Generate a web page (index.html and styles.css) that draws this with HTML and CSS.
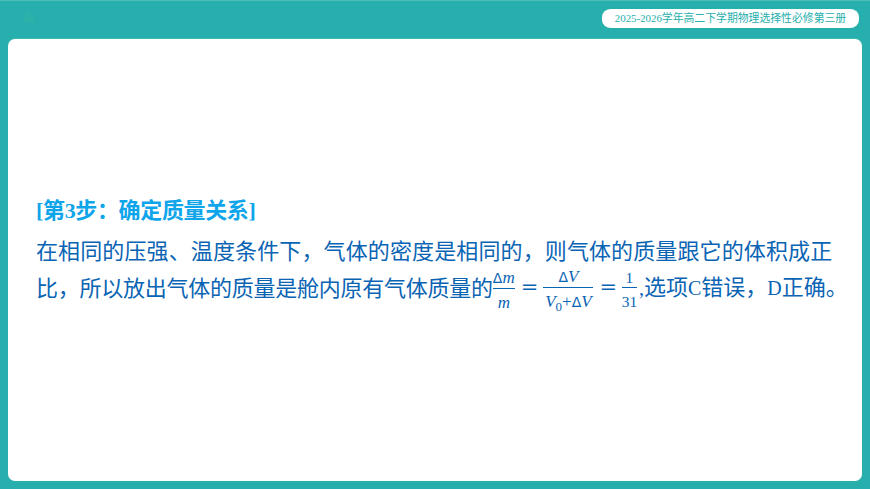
FILE: index.html
```html
<!DOCTYPE html>
<html lang="zh">
<head>
<meta charset="utf-8">
<title>物理</title>
<link rel="stylesheet" href="styles.css">
</head>
<body>
<div class="slide">
  <header class="top">
    <svg class="logo" width="14" height="14" viewBox="0 0 14 14"><path d="M7 1 L13 12 L1 12 Z" fill="#2db2a8"/></svg>
    <div class="pill">2025-2026学年高二下学期物理选择性必修第三册</div>
  </header>
  <main class="card">
    <h2 class="step">[第3步：确定质量关系]</h2>
    <p class="line">在相同的压强、温度条件下，气体的密度是相同的，则气体的质量跟它的体积成正</p>
    <p class="line second"><span class="lead">比，所以放出气体的质量是舱内原有气体质量的</span><span class="frac f1"><span class="num"><span class="up">Δ</span><i>m</i></span><span class="den"><i>m</i></span></span><span class="eq">=</span><span class="frac f2"><span class="num"><span class="up">Δ</span><i>V</i></span><span class="den"><i>V</i><sub>0</sub>+<span class="up">Δ</span><i>V</i></span></span><span class="eq">=</span><span class="frac f3"><span class="num">1</span><span class="den">31</span></span><span class="tail"><span class="latin">,</span>选项<span class="latin">C</span>错误，<span class="latin">D</span>正确。</span></p>
  </main>
</div>
</body>
</html>
```
FILE: styles.css
```css
* { box-sizing: border-box; }
html, body { margin: 0; padding: 0; }
body { width: 870px; height: 489px; overflow: hidden; }
.slide {
  width: 870px; height: 489px;
  background: #27afad;
  border-top: 1px solid #4dbdb9;
  padding: 0 8px 8px;
  display: flex; flex-direction: column;
}
.top {
  height: 38px; flex: none;
  display: flex; align-items: flex-start; justify-content: space-between;
}
.logo { margin: 9px 0 0 14px; }
.pill {
  margin: 8px 3px 0 0;
  width: 257px; height: 19px;
  background: #fff;
  border-radius: 9px / 8px;
  color: #27afad;
  font: 10.85px/19px "Liberation Serif", "Noto Sans CJK SC", serif;
  text-align: center;
  white-space: nowrap;
}
.card {
  flex: 1;
  background: #fff;
  border-radius: 7px;
  box-shadow: 0 -1px 0 #3ebab7;
  padding: 157px 0 0 28px;
  color: #0a64b4;
  font-family: "Liberation Serif", "Noto Sans CJK SC", serif;
  font-size: 22px;
}
.step {
  margin: 0;
  font-size: 22px; font-weight: 700; line-height: 30px;
  color: #0ea5ea;
  white-space: nowrap;
  letter-spacing: -0.35px;
}
.line {
  margin: 8px 0 0; line-height: 30px; height: 30px; white-space: nowrap;
  font-family: "Noto Sans CJK SC", "Liberation Serif", sans-serif;
  letter-spacing: 0.12px;
}
.second { margin-top: 7px; display: flex; align-items: center; letter-spacing: -0.25px; }
.latin { font-family: "Liberation Serif", serif; font-size: 20px; }
.tail { letter-spacing: 0; margin-left: 2px; }
.frac {
  display: inline-flex; flex-direction: column; align-items: center;
  font-family: "Liberation Serif", serif;
  font-size: 17px; line-height: 19px;
  margin-top: 7px; letter-spacing: 0;
}
.num { border-bottom: 1px solid #0a64b4; width: 100%; text-align: center; white-space: nowrap; }
.den { padding-top: 4px; white-space: nowrap; }
.up { font-family: "DejaVu Sans", sans-serif; font-size: 14px; }
.den sub { font-size: 13px; line-height: 0; }
.eq { font-family: "DejaVu Serif", serif; font-size: 21px; margin: 2px 5px 0 6px; letter-spacing: 0; }
.f1 { width: 22px; }
.f2 { width: 50px; }
.f3 { width: 15px; font-size: 15.5px; }
```
